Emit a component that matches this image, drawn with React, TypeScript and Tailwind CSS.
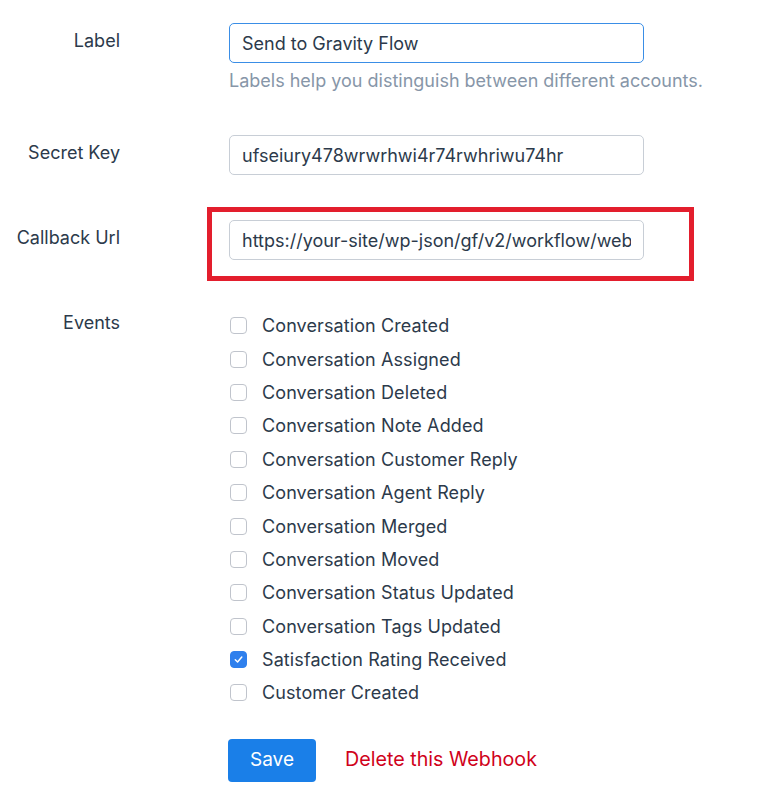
import { useState } from "react";

const EVENTS = [
  "Conversation Created",
  "Conversation Assigned",
  "Conversation Deleted",
  "Conversation Note Added",
  "Conversation Customer Reply",
  "Conversation Agent Reply",
  "Conversation Merged",
  "Conversation Moved",
  "Conversation Status Updated",
  "Conversation Tags Updated",
  "Satisfaction Rating Received",
  "Customer Created",
];

function Check({ checked, onToggle }: { checked: boolean; onToggle: () => void }) {
  return (
    <button
      type="button"
      onClick={onToggle}
      className={`flex h-[17px] w-[17px] shrink-0 items-center justify-center rounded-[4px] border ${
        checked ? "border-[#2f80ed] bg-[#2f80ed]" : "border-[#c0c4cc] bg-white"
      }`}
    >
      {checked && (
        <svg viewBox="0 0 12 12" className="h-[11px] w-[11px]" fill="none">
          <path d="M2.5 6.3 5 8.7 9.6 3.3" stroke="white" strokeWidth="1.6" strokeLinecap="round" strokeLinejoin="round" />
        </svg>
      )}
    </button>
  );
}

export default function App() {
  const [label, setLabel] = useState("Send to Gravity Flow");
  const [secret, setSecret] = useState("ufseiury478wrwrhwi4r74rwhriwu74hr");
  const [url, setUrl] = useState("https://your-site/wp-json/gf/v2/workflow/webhook");
  const [checked, setChecked] = useState<string[]>(["Satisfaction Rating Received"]);

  const toggle = (name: string) =>
    setChecked((c) => (c.includes(name) ? c.filter((x) => x !== name) : [...c, name]));

  return (
    <div className="min-h-[809px] w-[768px] bg-white font-['Inter',sans-serif] text-[#2c3a4b]">
      <div className="pt-[23px]">
        {/* Label */}
        <div className="flex">
          <div className="w-[120px] pt-[4px] text-right text-[18px]">Label</div>
          <div className="ml-[109px]">
            <input
              value={label}
              onChange={(e) => setLabel(e.target.value)}
              className="h-[40px] w-[415px] rounded-[5px] border border-[#3a8ee6] px-[12px] text-[18px] outline-none"
            />
            <p className="mt-[4px] text-[18px] text-[#8796a8]">
              Labels help you distinguish between different accounts.
            </p>
          </div>
        </div>

        {/* Secret Key */}
        <div className="mt-[41px] flex">
          <div className="w-[120px] pt-[4px] text-right text-[18px]">Secret Key</div>
          <div className="ml-[109px]">
            <input
              value={secret}
              onChange={(e) => setSecret(e.target.value)}
              className="h-[40px] w-[415px] rounded-[5px] border border-[#c8ced6] px-[12px] text-[18px] outline-none"
            />
          </div>
        </div>

        {/* Callback Url */}
        <div className="mt-[45px] flex">
          <div className="w-[120px] pt-[4px] text-right text-[18px]">Callback Url</div>
          <div className="relative ml-[109px]">
            <input
              value={url}
              onChange={(e) => setUrl(e.target.value)}
              className="h-[40px] w-[415px] rounded-[5px] border border-[#c8ced6] px-[12px] text-[18px] outline-none"
            />
            <div className="pointer-events-none absolute -left-[22px] -top-[13px] h-[74px] w-[487px] border-[5px] border-[#e31e2d]" />
          </div>
        </div>

        {/* Events */}
        <div className="mt-[49px] flex">
          <div className="w-[120px] text-right text-[18px]">Events</div>
          <div className="ml-[110px] flex flex-col">
            {EVENTS.map((name) => (
              <label key={name} className="flex h-[33.4px] cursor-pointer items-center gap-[15px] text-[18px] tracking-[0.1px]">
                <Check checked={checked.includes(name)} onToggle={() => toggle(name)} />
                <span>{name}</span>
              </label>
            ))}
          </div>
        </div>

        {/* Actions */}
        <div className="mt-[29px] flex items-center pl-[228px]">
          <button className="h-[43px] w-[88px] rounded-[4px] bg-[#1a7fe8] text-[19px] text-white">Save</button>
          <button className="ml-[29px] text-[19.7px] text-[#d0021b]">Delete this Webhook</button>
        </div>
      </div>
    </div>
  );
}
